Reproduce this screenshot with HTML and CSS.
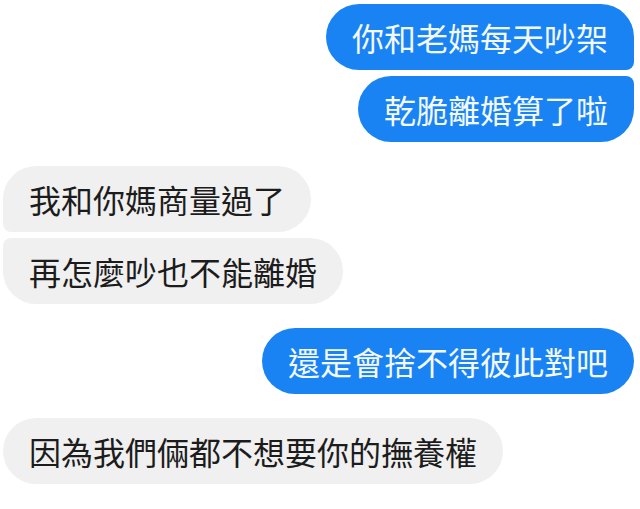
FILE: index.html
```html
<!DOCTYPE html>
<html lang="zh-Hant">
<head>
    <meta charset="UTF-8">
    <meta name="viewport" content="width=device-width, initial-scale=1.0">
    <title>聊天</title>
    <link rel="stylesheet" href="styles.css">
</head>
<body>
    <div class="chat">
        <div class="group">
            <div class="bubble sent first">你和老媽每天吵架</div>
            <div class="bubble sent last">乾脆離婚算了啦</div>
        </div>

        <div class="group">
            <div class="bubble received first">我和你媽商量過了</div>
            <div class="bubble received last">再怎麼吵也不能離婚</div>
        </div>

        <div class="group">
            <div class="bubble sent">還是會捨不得彼此對吧</div>
        </div>

        <div class="group">
            <div class="bubble received">因為我們倆都不想要你的撫養權</div>
        </div>
    </div>
</body>
</html>
```

FILE: styles.css
```css
body {
    font-family: "Noto Sans CJK TC", "Noto Sans", sans-serif;
    background-color: #fff;
    margin: 0;
    padding: 0;
}
.chat {
    display: flex;
    flex-direction: column;
    gap: 24px;
    padding: 4px 6px 0 3px;
}
.group {
    display: flex;
    flex-direction: column;
    gap: 6px;
}
.bubble {
    font-size: 32px;
    line-height: 66px;
    height: 66px;
    padding: 0 26px;
    border-radius: 33px;
    white-space: nowrap;
}
.sent {
    align-self: flex-end;
    background-color: #1a83f4;
    color: #f4f9ff;
}
.received {
    align-self: flex-start;
    background-color: #f0f0f0;
    color: #1c1c1c;
}
.sent.first {
    border-bottom-right-radius: 8px;
}
.sent.last {
    border-top-right-radius: 8px;
}
.received.first {
    border-bottom-left-radius: 8px;
}
.received.last {
    border-top-left-radius: 8px;
}
```
